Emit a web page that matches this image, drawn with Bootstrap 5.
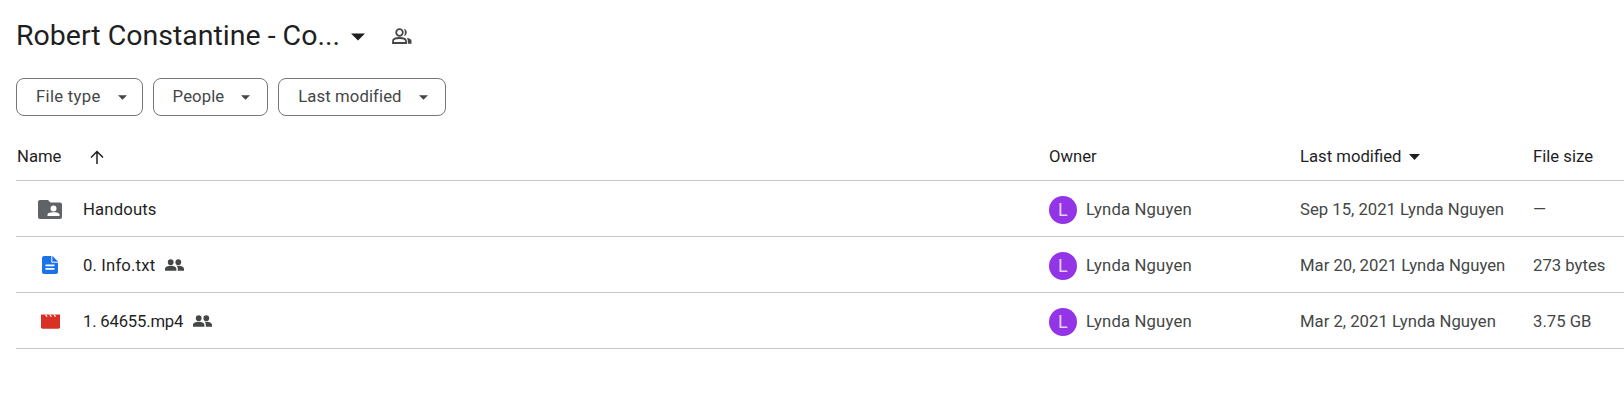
<!DOCTYPE html>
<html lang="en">
<head>
    <meta charset="UTF-8">
    <meta name="viewport" content="width=device-width, initial-scale=1.0">
    <title>Robert Constantine - Drive folder</title>
    <link href="https://cdn.jsdelivr.net/npm/bootstrap@5.3.0/dist/css/bootstrap.min.css" rel="stylesheet">
    <style>
        body {
            font-family: Roboto, "Liberation Sans", sans-serif;
            font-size: 16.7px;
            color: #1f1f1f;
            background: #fff;
            overflow: hidden;
        }
        .page-wrap {
            padding: 16px 0 0 16px;
            height: 404px;
        }
        .title-bar {
            height: 40px;
        }
        .folder-title {
            font-size: 28.5px;
            font-weight: 400;
            line-height: 40px;
            margin: 0;
            color: #1f1f1f;
        }
        .title-arrow { margin-left: 11px; margin-top: 1px; }
        .title-people { margin-left: 27px; }
        .chip-bar {
            margin-top: 22px;
            gap: 10px;
        }
        .chip-btn {
            height: 38px;
            border: 1px solid #747775;
            border-radius: 8px;
            background: #fff;
            color: #444746;
            font-size: 16.7px;
            font-weight: 400;
            letter-spacing: .1px;
            padding: 0 17px 0 19px;
            display: flex;
            align-items: center;
            gap: 17px;
        }
        .chip-btn.chip-wide { letter-spacing: .3px; padding-right: 15px; }
        .file-head, .file-row {
            display: grid;
            grid-template-columns: 1033px 251px 233px 1fr;
            align-items: center;
            border-bottom: 1px solid #c7c7c7;
            width: 1608px;
        }
        .file-head {
            height: 65px;
            padding-top: 18px;
            color: #1f1f1f;
        }
        .file-row {
            height: 56px;
            padding-top: 2px;
            color: #444746;
        }
        .name-cell { padding-left: 1px; }
        .sort-arrow { margin-left: 29px; }
        .file-icon {
            width: 24px;
            margin: 0 21px;
            flex: none;
            display: flex;
            justify-content: center;
        }
        .file-name { color: #1f1f1f; letter-spacing: .15px; }
        .file-name.name-tight { letter-spacing: -.2px; }
        .shared-mark { margin-left: 10px; color: #444746; }
        .owner-cell { letter-spacing: .15px; }
        .owner-pic {
            width: 28px;
            height: 28px;
            border-radius: 50%;
            background: #9334e6;
            color: #e3cffa;
            font-size: 18px;
            line-height: 28px;
            text-align: center;
            margin-right: 9px;
            flex: none;
        }
    </style>
</head>
<body>
    <div class="page-wrap">
        <div class="title-bar d-flex align-items-center">
            <h1 class="folder-title">Robert Constantine - Co...</h1>
            <svg class="title-arrow" width="14" height="8" viewBox="0 0 14 8"><path d="M0 0.500h14L7 7.500z" fill="#1f1f1f"/></svg>
            <svg class="title-people" width="20" height="16" viewBox="0 0 20 16" fill="none" stroke="#444746" stroke-width="1.800">
                <circle cx="7.500" cy="4.500" r="3.300"/>
                <path d="M1 15v-1.800c0-2 3-3.200 6.500-3.200s6.500 1.200 6.500 3.200V15z"/>
                <path d="M12 .7a4 4 0 0 1 0 7.600c1.200-2.300 1.200-5.300 0-7.600zM14.800 9.800c2.700.5 4.700 1.500 4.700 3.300V15.800h-3.700v-2.500c0-1.500-.3-2.600-1-3.500z" fill="#444746" stroke="none"/>
            </svg>
        </div>
        <div class="chip-bar d-flex">
            <button type="button" class="chip-btn chip-wide">File type <svg width="9" height="5" viewBox="0 0 10 5"><path d="M0 0h10L5 5z" fill="#444746"/></svg></button>
            <button type="button" class="chip-btn">People <svg width="9" height="5" viewBox="0 0 10 5"><path d="M0 0h10L5 5z" fill="#444746"/></svg></button>
            <button type="button" class="chip-btn">Last modified <svg width="9" height="5" viewBox="0 0 10 5"><path d="M0 0h10L5 5z" fill="#444746"/></svg></button>
        </div>

        <div class="file-head">
            <div class="name-cell d-flex align-items-center">Name
                <svg class="sort-arrow" width="14" height="14" viewBox="0 0 14 14" fill="none" stroke="#1f1f1f" stroke-width="1.500"><path d="M7 14V1.500M1 7.500l6-6 6 6"/></svg>
            </div>
            <div>Owner</div>
            <div class="d-flex align-items-center">Last modified
                <svg class="ms-2" width="11" height="6" viewBox="0 0 11 6"><path d="M0 0h11L5.500 6z" fill="#1f1f1f"/></svg>
            </div>
            <div>File size</div>
        </div>

        <div class="file-row">
            <div class="name-cell d-flex align-items-center">
                <div class="file-icon"><svg width="24" height="19" viewBox="0 0 24 19" class="d-block"><path fill-rule="evenodd" d="M2 0h8l2.500 2.500H22a2 2 0 0 1 2 2V17a2 2 0 0 1-2 2H2a2 2 0 0 1-2-2V2a2 2 0 0 1 2-2zm13.500 5.500a3 3 0 1 0 0 6 3 3 0 0 0 0-6zM9.500 16v-1.500c0-1.600 3.500-2.300 6-2.300s6 .7 6 2.300V16z" fill="#5f6368"/></svg></div>
                <span class="file-name">Handouts</span>
            </div>
            <div class="owner-cell d-flex align-items-center"><div class="owner-pic">L</div>Lynda Nguyen</div>
            <div>Sep 15, 2021 Lynda Nguyen</div>
            <div>—</div>
        </div>

        <div class="file-row">
            <div class="name-cell d-flex align-items-center">
                <div class="file-icon"><svg width="16" height="18" viewBox="0 0 16 18" class="d-block"><path d="M2 0h8.500L16 5.500V16a2 2 0 0 1-2 2H2a2 2 0 0 1-2-2V2a2 2 0 0 1 2-2z" fill="#1a73e8"/><path d="M9.800 0v6.200H16" fill="none" stroke="#fff" stroke-width="1"/><path d="M3.500 8.500h9v1.700h-9zM3.500 12h9v1.700h-9z" fill="#fff"/></svg></div>
                <span class="file-name">0. Info.txt</span>
                <svg class="shared-mark" width="19" height="12" viewBox="0 0 20 12" fill="currentColor"><circle cx="6" cy="3" r="3"/><circle cx="14" cy="3" r="3"/><path d="M0 12v-2c0-2 3-3.300 6-3.300s6 1.300 6 3.300v2zM13.500 12v-2c0-1.300-.6-2.400-1.600-3.100.7-.2 1.400-.2 2.100-.2 3 0 6 1.300 6 3.300v2z"/></svg>
            </div>
            <div class="owner-cell d-flex align-items-center"><div class="owner-pic">L</div>Lynda Nguyen</div>
            <div>Mar 20, 2021 Lynda Nguyen</div>
            <div>273 bytes</div>
        </div>

        <div class="file-row">
            <div class="name-cell d-flex align-items-center">
                <div class="file-icon"><svg width="19" height="15" viewBox="0 0 20 15" class="d-block"><path d="M0 0h20v13.500a1.500 1.500 0 0 1-1.500 1.500h-17A1.500 1.500 0 0 1 0 13.500z" fill="#d93025"/><path d="M4 0h1.500l1.500 2.500H5.500zM8.500 0H10l1.500 2.500H10zM13 0h1.500L16 2.500h-1.500z" fill="#fff"/></svg></div>
                <span class="file-name name-tight">1. 64655.mp4</span>
                <svg class="shared-mark" width="19" height="12" viewBox="0 0 20 12" fill="currentColor"><circle cx="6" cy="3" r="3"/><circle cx="14" cy="3" r="3"/><path d="M0 12v-2c0-2 3-3.300 6-3.300s6 1.300 6 3.300v2zM13.500 12v-2c0-1.300-.6-2.400-1.600-3.100.7-.2 1.400-.2 2.100-.2 3 0 6 1.300 6 3.300v2z"/></svg>
            </div>
            <div class="owner-cell d-flex align-items-center"><div class="owner-pic">L</div>Lynda Nguyen</div>
            <div>Mar 2, 2021 Lynda Nguyen</div>
            <div>3.75 GB</div>
        </div>
    </div>
    <script src="https://cdn.jsdelivr.net/npm/bootstrap@5.3.0/dist/js/bootstrap.bundle.min.js"></script>
</body>
</html>
